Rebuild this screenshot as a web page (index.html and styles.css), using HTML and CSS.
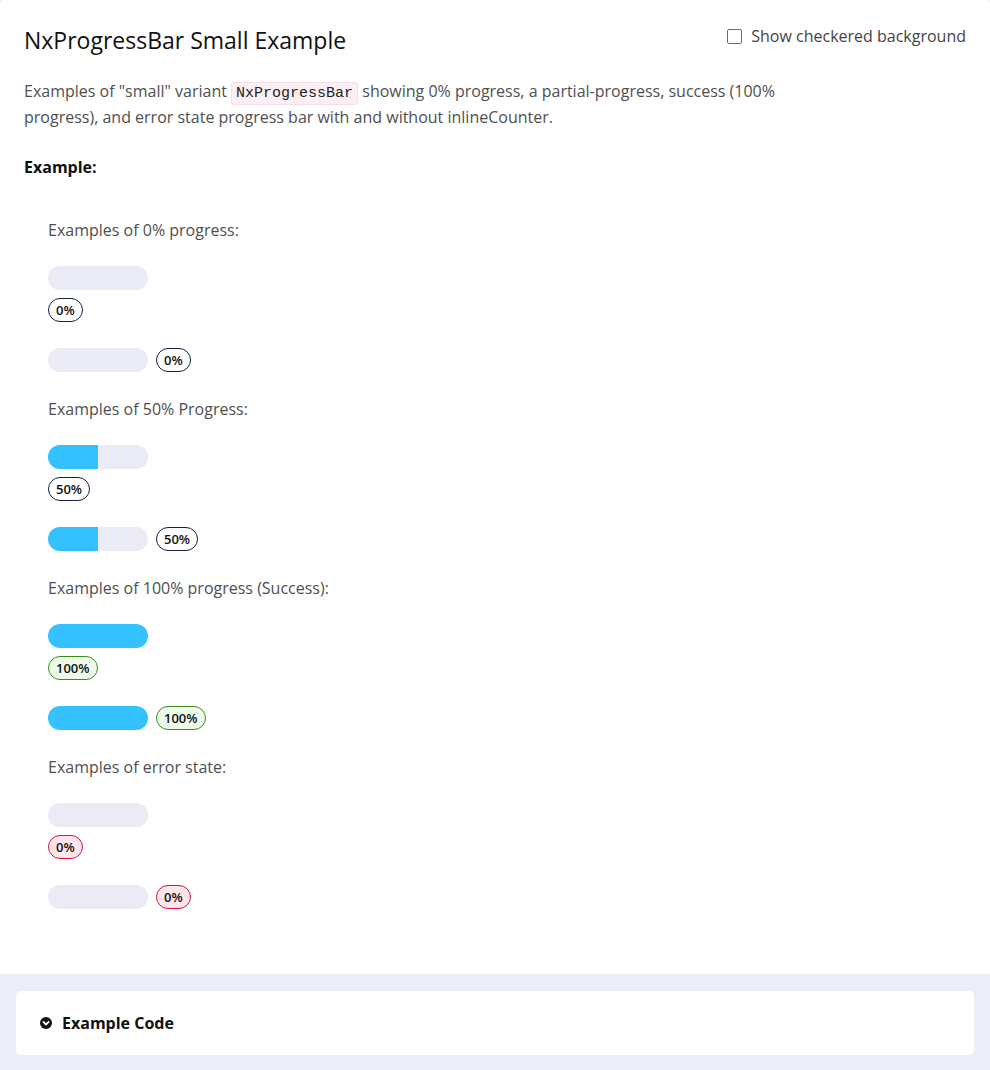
FILE: index.html
```html
<!DOCTYPE html>
<html lang="en">
<head>
<meta charset="utf-8">
<title>NxProgressBar Small Example</title>
<link rel="stylesheet" href="styles.css">
</head>
<body>
<div class="page">
  <section class="example-card">
    <header class="card-header">
      <h2 class="title">NxProgressBar Small Example</h2>
      <label class="checkbox">
        <span class="box"></span>
        <span class="checkbox-text">Show checkered background</span>
      </label>
    </header>
    <p class="desc">Examples of "small" variant <code class="code">NxProgressBar</code> showing 0% progress, a partial-progress, success (100% progress), and error state progress bar with and without inlineCounter.</p>
    <h3 class="example-heading">Example:</h3>
    <div class="demo">
      <div class="group">
        <p class="group-label">Examples of 0% progress:</p>
        <div class="progress stacked">
          <div class="track"><div class="fill" style="width:0%"></div></div>
          <span class="counter">0%</span>
        </div>
        <div class="progress inline">
          <div class="track"><div class="fill" style="width:0%"></div></div>
          <span class="counter">0%</span>
        </div>
      </div>
      <div class="group">
        <p class="group-label">Examples of 50% Progress:</p>
        <div class="progress stacked">
          <div class="track"><div class="fill" style="width:50%"></div></div>
          <span class="counter">50%</span>
        </div>
        <div class="progress inline">
          <div class="track"><div class="fill" style="width:50%"></div></div>
          <span class="counter">50%</span>
        </div>
      </div>
      <div class="group">
        <p class="group-label">Examples of 100% progress (Success):</p>
        <div class="progress stacked">
          <div class="track"><div class="fill full" style="width:100%"></div></div>
          <span class="counter success">100%</span>
        </div>
        <div class="progress inline">
          <div class="track"><div class="fill full" style="width:100%"></div></div>
          <span class="counter success">100%</span>
        </div>
      </div>
      <div class="group">
        <p class="group-label">Examples of error state:</p>
        <div class="progress stacked">
          <div class="track"><div class="fill" style="width:0%"></div></div>
          <span class="counter error">0%</span>
        </div>
        <div class="progress inline">
          <div class="track"><div class="fill" style="width:0%"></div></div>
          <span class="counter error">0%</span>
        </div>
      </div>
    </div>
  </section>
  <footer class="code-footer">
    <div class="code-card">
      <svg class="chev" viewBox="0 0 12 12" width="12" height="12" aria-hidden="true">
        <circle cx="6" cy="6" r="6" fill="#111"/>
        <path d="M3.4 4.9 L6 7.5 L8.6 4.9" fill="none" stroke="#fff" stroke-width="1.8" stroke-linecap="round" stroke-linejoin="round"/>
      </svg>
      <span class="code-title">Example Code</span>
    </div>
  </footer>
</div>
</body>
</html>
```

FILE: styles.css
```css
* { box-sizing: border-box; }

html, body {
  margin: 0;
  padding: 0;
}

body {
  background: #ededf7;
  font-family: "Open Sans", "Liberation Sans", sans-serif;
  color: #111;
}

.page {
  width: 990px;
  min-height: 1070px;
  display: flex;
  flex-direction: column;
}

.example-card {
  background: #fff;
  border-radius: 4px 4px 0 0;
  padding: 24px 24px 65px;
}

.card-header {
  display: flex;
  justify-content: space-between;
  align-items: flex-start;
}

.title {
  margin: 1px 0 0;
  font-size: 23px;
  font-weight: 500;
  line-height: 30px;
  color: #111;
}

.checkbox {
  display: flex;
  align-items: center;
  gap: 9px;
}

.box {
  width: 15px;
  height: 15px;
  border: 1px solid #6b6b6b;
  border-radius: 2px;
  background: #fff;
}

.checkbox-text {
  font-size: 16px;
  line-height: 24px;
  color: #444;
}

.desc {
  margin: 23px 0 0;
  max-width: 800px;
  font-size: 16px;
  line-height: 26px;
  color: #4f4f4f;
}

.code {
  font-family: "Liberation Mono", "DejaVu Sans Mono", monospace;
  font-size: 15px;
  line-height: 18px;
  color: #222;
  background: #fdf0f5;
  border: 1px solid #fadce8;
  border-radius: 3px;
  padding: 2px 4px;
}

.example-heading {
  margin: 25px 0 0;
  font-size: 16px;
  font-weight: 700;
  line-height: 24px;
  color: #111;
}

.demo {
  padding: 40px 24px 0;
}

.group {
  display: flex;
  flex-direction: column;
  align-items: flex-start;
}

.group + .group {
  margin-top: 26px;
}

.group-label {
  margin: 0 0 25px;
  font-size: 16px;
  line-height: 22px;
  color: #4f4f4f;
}

.progress {
  display: flex;
}

.progress.stacked {
  flex-direction: column;
  align-items: flex-start;
  gap: 8px;
}

.progress.inline {
  flex-direction: row;
  align-items: center;
  gap: 8px;
  margin-top: 26px;
}

.track {
  width: 100px;
  height: 24px;
  border-radius: 12px;
  background: #ebebf5;
  overflow: hidden;
}

.fill {
  height: 100%;
  background: #33c2ff;
}

.counter {
  display: inline-block;
  height: 24px;
  padding: 0 7px;
  border: 1px solid #13223d;
  border-radius: 12px;
  background: #fff;
  font-size: 13px;
  font-weight: 600;
  line-height: 22px;
  color: #111;
}

.counter.success {
  background: #eefbe8;
  border-color: #3b8b1d;
}

.counter.error {
  background: #ffe5ec;
  border-color: #d4153f;
}

.code-footer {
  flex: 1;
  background: #ededf7;
  padding: 17px 16px 16px;
}

.code-card {
  background: #fff;
  border-radius: 5px;
  height: 64px;
  display: flex;
  align-items: center;
  gap: 10px;
  padding: 0 24px;
}

.chev {
  display: block;
  flex: none;
}

.code-title {
  font-size: 16px;
  font-weight: 700;
  color: #111;
}
```
